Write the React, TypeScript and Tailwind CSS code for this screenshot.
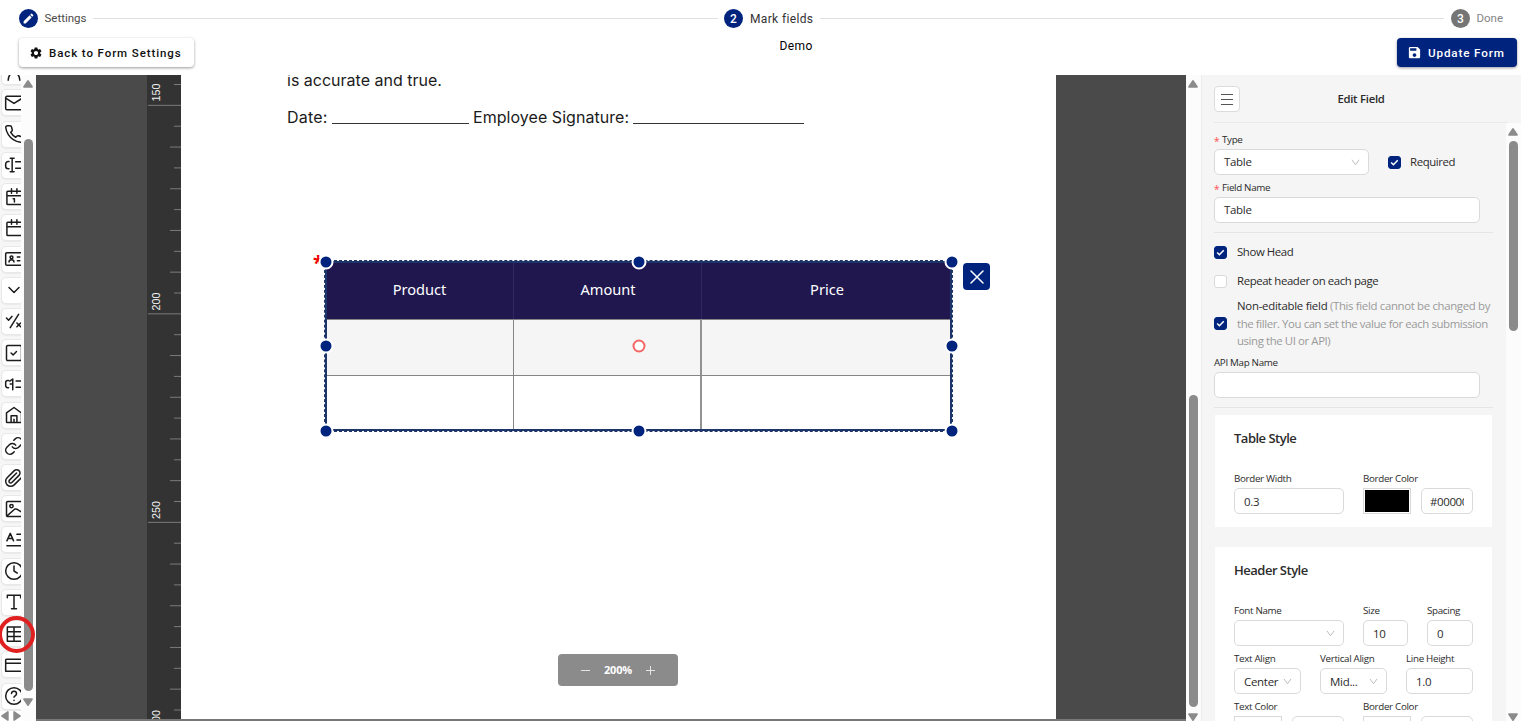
import React from "react";
import { MdEdit, MdSettings, MdSave } from "react-icons/md";

const railIcons: React.ReactNode[] = [
  <path d="M5 22c0-12 14-12 14 0" />,
  <><rect x="2" y="4" width="20" height="16" rx="1.5" /><path d="M2.5 6.5 12 12.5l9.5-6" /></>,
  <path d="M22 16.92v3a2 2 0 0 1-2.18 2 19.79 19.79 0 0 1-8.63-3.07 19.5 19.5 0 0 1-6-6A19.79 19.79 0 0 1 2.12 4.18 2 2 0 0 1 4.11 2h3a2 2 0 0 1 2 1.72c.13.96.36 1.9.7 2.81a2 2 0 0 1-.45 2.11L8.09 9.91a16 16 0 0 0 6 6l1.27-1.27a2 2 0 0 1 2.11-.45c.91.34 1.85.57 2.81.7A2 2 0 0 1 22 16.92z" />,
  <path d="M6 7.8H5a3 3 0 0 0-3 3v2.6a3 3 0 0 0 3 3h1M9.8 4.5v15M7.5 4h4.6M7.5 20h4.6M14 8h8M14 16h8" />,
  <><path d="M21 5H4.5a1 1 0 0 0-1 1v14a1 1 0 0 0 1 1H21M3.5 10.5H22M9 2v5.5M15.5 2v5.5" /><path d="M11 14h1.5v4" /></>,
  <path d="M21 5H4.5a1 1 0 0 0-1 1v14a1 1 0 0 0 1 1H21M3.5 10.5H22M9 2v5.5M15.5 2v5.5" />,
  <><rect x="2" y="4.5" width="20" height="15" rx="1.5" /><circle cx="9" cy="10" r="1.7" /><path d="M6 15.5c0-3.6 6-3.6 6 0M16 9.5h3M16 14h3" /></>,
  <path d="m6 9 6 6 6-6" />,
  <path d="m3 8.5 2.5 2.5 4-4.5M17.5 4 7.5 20M15.5 14.5l4.5 4.5M20 14.5 15.5 19" />,
  <><rect x="3" y="3" width="18" height="18" rx="1.5" /><path d="m8.5 12 2.5 2.3 4-4" /></>,
  <path d="M5.5 7.8H4.5A2.5 2.5 0 0 0 2 10.3v3.6a2.5 2.5 0 0 0 2.5 2.5h1M7 8.5 10.5 6v13M7.5 12h3M14.5 8.5H22M14.5 16H22" />,
  <path d="M3 20V9.500L12 3l9 6.500V21H4a1 1 0 0 1-1-1M8.500 21v-8h7v8M12 17v4" />,
  <path d="M10 13a5 5 0 0 0 7.54.54l3-3a5 5 0 0 0-7.07-7.07l-1.72 1.71M14 11a5 5 0 0 0-7.54-.54l-3 3a5 5 0 0 0 7.07 7.07l1.71-1.71" />,
  <path d="m21.44 11.05-9.19 9.19a6 6 0 0 1-8.49-8.49l8.57-8.57A4 4 0 1 1 18 8.84l-8.59 8.57a2 2 0 0 1-2.83-2.83l8.49-8.48" />,
  <><rect x="3" y="3" width="19" height="18" rx="1.5" /><circle cx="9" cy="8.5" r="2" /><path d="m4 20 9-8c3-1 4 2 9 4" /></>,
  <><path d="m3.5 13 4-9 4 9M5 10.3h5M15.5 5H22M15.5 12H22M3.5 19H22" /></>,
  <><circle cx="12" cy="12" r="10" /><path d="M12 6v6l4 2.5" /></>,
  <path d="M4 7V4h16v3M12 4v16M9 20h6" />,
  <path d="M4 3.5h18M4 9.3h18M4 15h18M4 20.8h18M4 3.5v17.3M12 3.5v17.3" />,
  <path d="M22 5H3a1 1 0 0 0-1 1v13.5h20M2 10h20" />,
  <><circle cx="12" cy="12" r="10" /><path d="M9 9a3 3 0 0 1 6 .5c0 2-3 2.5-3 4M12 17.2v.2" /></>,
];

function Tri({ className }: { className: string }) {
  return (
    <svg viewBox="0 0 10 8" className={`h-2 w-2.5 shrink-0 ${className}`} fill="#8b8b8b">
      <path d="M4.2.6a1 1 0 0 1 1.6 0L9.8 6.500a.8.8 0 0 1-.7 1.200H.9a.8.8 0 0 1-.7-1.200z" />
    </svg>
  );
}

function Rail() {
  return (
    <div className="flex h-full w-9 bg-white">
      <div className="flex w-[21px] flex-col overflow-hidden">
        <div className="h-[636px] overflow-hidden bg-[#f6f6f6]">
          <div className="-mt-[16.8px] flex flex-col gap-[4.22px]">
            {railIcons.map((icon, i) => (
              <div
                key={i}
                className="ml-px flex h-[27px] w-[26px] shrink-0 items-center justify-center rounded-[5px] border border-[#e8e8e8] bg-white shadow-[0_1px_1px_rgba(0,0,0,0.05)]"
              >
                <svg
                  viewBox="0 0 24 24"
                  className="size-5 shrink-0"
                  fill="none"
                  stroke="#1c1c1c"
                  strokeWidth="1.8"
                  strokeLinecap="round"
                  strokeLinejoin="round"
                >
                  {icon}
                </svg>
              </div>
            ))}
          </div>
        </div>
        <div className="flex h-2.5 items-center gap-0.5">
          <Tri className="-rotate-90" />
          <Tri className="rotate-90" />
        </div>
      </div>
      <div className="flex w-[15px] flex-col items-center bg-[#fcfcfc] pt-[5px] pr-px">
        <Tri className="" />
        <div className="mt-[51px] h-[552px] w-[9px] shrink-0 rounded-full bg-[#8b8b8b]" />
        <Tri className="mt-[7px] rotate-180" />
      </div>
    </div>
  );
}

const ticks = Array.from({ length: 31 }, (_, i) => ({ y: 9.5 + i * 20.85, i }));

function Ruler() {
  return (
    <svg className="block h-full w-[34px] shrink-0 bg-[#333]" viewBox="0 0 34 644" preserveAspectRatio="xMinYMin slice">
      {ticks.map(({ y, i }) => {
        const x = i % 10 === 1 ? 1 : i % 2 === 1 ? 23 : 27;
        return <line key={i} x1={x} x2="34" y1={y} y2={y} stroke="#7b7b7b" strokeWidth="1" />;
      })}
      {[
        ["150", 17.5],
        ["200", 226.5],
        ["250", 435],
        ["300", 644],
      ].map(([t, y]) => (
        <text
          key={t}
          transform={`translate(12.5 ${y}) rotate(-90)`}
          textAnchor="middle"
          className="fill-[#f2f2f2] font-['Liberation_Sans'] text-[10.8px]"
        >
          {t}
        </text>
      ))}
    </svg>
  );
}

function Handle({ className }: { className: string }) {
  return (
    <span
      className={`absolute size-[15px] -translate-x-1/2 -translate-y-1/2 rounded-full border-2 border-white bg-[#00247d] ${className}`}
    />
  );
}

function FormTable() {
  return (
    <div className="absolute left-[144px] top-[186px] h-[170px] w-[627px]">
      <div className="grid h-full w-full grid-cols-[189px_188px_250px] grid-rows-[58px_57px_55px] font-['Noto_Sans',sans-serif] text-[14.6px] text-white">
        {["Product", "Amount", "Price"].map((h) => (
          <div key={h} className="flex items-center justify-center border-r border-[#302863] bg-[#21174f] pb-px pl-px">
            {h}
          </div>
        ))}
        {[0, 1, 2].map((c) => (
          <div key={c} className={`border-y border-[#858585] bg-[#f5f5f5] ${c === 0 ? "border-r" : c === 1 ? "border-r-2 border-r-[#929292]" : ""}`} />
        ))}
        {[0, 1, 2].map((c) => (
          <div key={c} className={`border-[#858585] ${c === 0 ? "border-r" : c === 1 ? "border-r-2 border-r-[#929292]" : ""}`} />
        ))}
      </div>
      <div className="absolute inset-0 border-2 border-[#1d3568]" />
      <div className="absolute -inset-px border border-dashed border-[#1d3568]" />
      <span className="absolute -left-3 -top-2 font-['Noto_Sans',sans-serif] text-[19px] font-bold leading-[20px] text-[#f00000]">*</span>
      <Handle className="left-px top-px" />
      <Handle className="left-1/2 top-px" />
      <Handle className="left-full top-px" />
      <Handle className="left-px top-1/2" />
      <Handle className="left-full top-1/2" />
      <Handle className="left-px top-full" />
      <Handle className="left-1/2 top-full" />
      <Handle className="left-full top-full" />
      <span className="absolute left-1/2 top-1/2 size-[13px] -translate-x-1/2 -translate-y-1/2 rounded-full border-2 border-[#f56565] bg-white" />
      <button className="absolute -right-[38px] top-0.5 flex size-[27px] items-center justify-center rounded-[4px] bg-[#00247d]">
        <svg viewBox="0 0 14 14" className="size-3.5" stroke="#fff" strokeWidth="1.5" strokeLinecap="round">
          <path d="m1 1 12 12M13 1 1 13" />
        </svg>
      </button>
    </div>
  );
}

function Canvas() {
  return (
    <div className="flex min-w-0 flex-1 flex-col">
      <div className="flex h-[644px] bg-[#4a4a4a]">
        <div className="w-[111px]" />
        <Ruler />
        <div className="relative w-[875px] overflow-hidden bg-white pl-[106px] font-['Inter',sans-serif] text-[16px] text-[#1b1b1b]">
          <p className="-mt-[7px] h-[25px] leading-[25px]">is accurate and true.</p>
          <p className="mt-3 flex h-[25px] whitespace-pre leading-[25px]">
            <span className="w-[45px] tracking-[0.2px]">Date:</span>
            <span className="mt-[18px] h-px w-[137px] bg-[#333]" />
            <span className="ml-1 w-[160px] tracking-[0.05px]">Employee Signature:</span>
            <span className="mt-[18px] h-px w-[171px] bg-[#333]" />
          </p>
          <FormTable />
          <div className="absolute left-[377px] top-[579px] flex h-8 w-[120px] items-center justify-center gap-3.5 rounded-[4px] bg-[#8b8b8b] font-['Open_Sans',sans-serif] text-[11px] font-bold tracking-[-0.2px] text-white">
            <svg viewBox="0 0 10 10" className="size-[9px]" stroke="#eee"><path d="M0 5h10" /></svg>
            <span>200%</span>
            <svg viewBox="0 0 10 10" className="size-[9px]" stroke="#eee"><path d="M0 5h10M5 0v10" /></svg>
          </div>
        </div>
      </div>
      <div className="h-0.5 bg-[#777]" />
    </div>
  );
}

function Check({ on = true }: { on?: boolean }) {
  return (
    <span className={`flex size-[13px] shrink-0 items-center justify-center rounded-[3px] border ${on ? "border-[#00247d] bg-[#00247d]" : "border-[#d9d9d9] bg-white"}`}>
      {on && (
        <svg viewBox="0 0 10 10" className="size-[9px]" fill="none" stroke="#fff" strokeWidth="1.7">
          <path d="m1.3 5 2.5 2.5 4.8-5" />
        </svg>
      )}
    </span>
  );
}

function Field({
  label,
  value,
  className,
  required,
  select,
}: {
  label: string;
  value?: string;
  className: string;
  required?: boolean;
  select?: boolean;
}) {
  return (
    <div className={`shrink-0 ${className}`}>
      <div className="flex h-[18px] items-center whitespace-nowrap text-[9.8px] tracking-[-0.32px]">
        {required && <span className="mr-[3px] mt-0.5 w-[5px] text-[10px] text-[#ff4d4f]">*</span>}
        {label}
      </div>
      <div className="flex h-[26px] items-center justify-between rounded-[5px] border border-[#dadada] bg-white pl-[9px] pr-2 text-[11.5px] tracking-[-0.3px]">
        <span className="whitespace-nowrap">{value}</span>
        {select && (
          <svg viewBox="0 0 10 10" className="size-[9px] shrink-0" fill="none" stroke="#bcbcbc" strokeWidth="1.1">
            <path d="m1 2 4 5.5L9 2" />
          </svg>
        )}
      </div>
    </div>
  );
}

function ColorField({ label, swatch, value }: { label: string; swatch: "black" | "white"; value: string }) {
  return (
    <div className="w-[110px] shrink-0">
      <div className="flex h-[18px] items-center text-[9.8px] tracking-[-0.32px]">{label}</div>
      <div className="flex justify-between">
        <div className="h-[26px] w-12 border border-[#d9d9d9] p-px">
          <div className={`h-full w-full ${swatch === "black" ? "bg-black" : "bg-white"}`} />
        </div>
        <div className="flex h-[26px] w-[52px] items-center rounded-[5px] border border-[#dadada] bg-white px-2 text-[11.5px]">
          <span className="overflow-hidden whitespace-nowrap">{value}</span>
        </div>
      </div>
    </div>
  );
}

function Panel() {
  return (
    <aside className="flex h-full w-80 shrink-0 flex-col border-l border-[#ebebeb] bg-[#f5f5f5] font-['Open_Sans',sans-serif] text-[11.4px] tracking-[-0.4px] text-[#2b2b2b]">
      <div className="ml-3 mr-[13px] flex h-12 shrink-0 items-center border-b border-[#e9e9e9]">
        <button className="flex size-[26px] items-center justify-center rounded-[4px] border border-[#dcdcdc] bg-white">
          <svg viewBox="0 0 12 12" className="size-3" stroke="#555"><path d="M0 1.5h12M0 6.5h12M0 11.5h12" /></svg>
        </button>
        <h2 className="mr-[26px] flex-1 pt-0.5 text-center text-[11.3px] font-semibold tracking-[-0.25px]">Edit Field</h2>
      </div>
      <div className="flex min-h-0 flex-1">
        <div className="w-[304px] overflow-hidden pl-3 pr-[13px]">
          <div className="mt-2 flex items-end">
            <Field label="Type" value="Table" required select className="w-[155px]" />
            <div className="ml-[19px] flex h-[26px] items-center gap-[9px]"><Check />Required</div>
          </div>
          <Field label="Field Name" value="Table" required className="mt-1 w-[266px]" />
          <hr className="mt-[9px] border-[#e5e5e5]" />
          <div className="mt-[9px] flex h-5 items-center gap-2.5"><Check />Show Head</div>
          <div className="mt-[9px] flex h-5 items-center gap-2.5"><Check on={false} />Repeat header on each page</div>
          <div className="mt-[6px] flex items-center gap-2.5">
            <Check />
            <p className="whitespace-nowrap leading-[17.6px] text-[#9a9a9a]">
              <span className="tracking-[-0.25px] text-[#2b2b2b]">Non-editable field</span>{" "}
              <span className="tracking-[-0.33px]">(This field cannot be changed by</span>
              <br />the filler. You can set the value for each submission
              <br />using the UI or API)
            </p>
          </div>
          <Field label="API Map Name" className="mt-[4.5px] w-[266px]" />
          <hr className="mt-[8.5px] border-[#e5e5e5]" />
          <section className="ml-px mt-[7px] h-[112px] w-[277px] bg-white px-[19px] pt-[13px]">
            <h3 className="h-5 text-[13px] font-semibold leading-5 tracking-[-0.5px]">Table Style</h3>
            <div className="mt-[22.4px] flex gap-[19px]">
              <Field label="Border Width" value="0.3" className="w-[110px]" />
              <ColorField label="Border Color" swatch="black" value="#000000" />
            </div>
          </section>
          <section className="ml-px mt-5 h-[220px] w-[277px] bg-white px-[19px] pt-[13px]">
            <h3 className="h-5 text-[13px] font-semibold leading-5 tracking-[-0.5px]">Header Style</h3>
            <div className="mt-[22.4px] flex justify-between">
              <Field label="Font Name" select className="w-[110px]" />
              <Field label="Size" value="10" className="w-[45px]" />
              <Field label="Spacing" value="0" className="w-[46px]" />
            </div>
            <div className="mt-1 flex justify-between">
              <Field label="Text Align" value="Center" select className="w-[67px]" />
              <Field label="Vertical Align" value="Mid..." select className="w-[67px]" />
              <Field label="Line Height" value="1.0" className="w-[67px]" />
            </div>
            <div className="mt-1 flex gap-[19px]">
              <ColorField label="Text Color" swatch="white" value="" />
              <ColorField label="Border Color" swatch="white" value="" />
            </div>
          </section>
        </div>
        <div className="flex w-[15px] flex-col items-center bg-[#fcfcfc] pt-[5px] pr-px">
          <Tri className="" />
          <div className="mt-[5px] h-[190px] w-[9px] shrink-0 rounded-full bg-[#8b8b8b]" />
          <Tri className="mt-auto mb-0 rotate-180" />
        </div>
      </div>
    </aside>
  );
}

export default function App() {
  return (
    <div className="h-[721px] w-full overflow-hidden bg-white">
      <div className="flex h-full w-[1521px] flex-col font-['Roboto',sans-serif]">
        <header className="flex h-[37px] shrink-0 items-center pl-[19px] pr-[18px] text-[12px] text-[#4a4a4a]">
          <span className="flex size-[19px] items-center justify-center rounded-full bg-[#00247d] text-white"><MdEdit size={13} /></span>
          <span className="ml-[6.5px] w-[42px] whitespace-nowrap text-[11.5px]">Settings</span>
          <span className="mx-1.5 h-px w-[625.5px] bg-[#e0e0e0]" />
          <span className="flex size-[19px] items-center justify-center rounded-full bg-[#00247d] font-medium text-white">2</span>
          <span className="ml-[7px] w-[63px] whitespace-nowrap tracking-[0.35px] text-[#333]">Mark fields</span>
          <span className="mx-[7px] h-px flex-1 bg-[#e0e0e0]" />
          <span className="flex size-[19px] items-center justify-center rounded-full bg-[#757575] font-medium text-white">3</span>
          <span className="ml-[6.5px] w-[26.5px] whitespace-nowrap text-[11.5px] text-[#858585]">Done</span>
        </header>
        <div className="flex h-[38px] shrink-0 items-start justify-between pl-[19px] pr-1">
          <button className="mt-px flex h-[29px] w-[175px] items-center rounded-[4px] bg-white pl-2.5 text-[11.5px] font-medium text-[#111] shadow-[0_1px_3px_rgba(0,0,0,0.4)]">
            <MdSettings size={14} />
            <span className="ml-1.5 whitespace-nowrap pt-0.5 tracking-[0.9px]">Back to Form Settings</span>
          </button>
          <span className="ml-[6px] mt-px w-[38px] text-[12px] leading-4 tracking-[0.4px] text-black">Demo</span>
          <button className="mt-px flex h-[29px] w-[120px] items-center rounded-[4px] bg-[#00247d] pl-2.5 text-[11.7px] font-medium text-white shadow-[0_1px_3px_rgba(0,0,0,0.4)]">
            <MdSave size={15} />
            <span className="ml-1.5 whitespace-nowrap pt-0.5 tracking-[0.85px]">Update Form</span>
          </button>
        </div>
        <main className="flex min-h-0 flex-1">
          <Rail />
          <Canvas />
          <div className="flex w-[15px] shrink-0 flex-col items-center bg-[#fcfcfc] pt-[5px] pr-px">
            <Tri className="" />
            <div className="mt-[307px] h-[312px] w-[9px] shrink-0 rounded-full bg-[#8b8b8b]" />
            <Tri className="mt-[6px] rotate-180" />
          </div>
          <Panel />
        </main>
      </div>
      <span className="absolute -left-[2px] top-[616px] size-[37px] rounded-full border-4 border-[#e02020]" />
    </div>
  );
}
